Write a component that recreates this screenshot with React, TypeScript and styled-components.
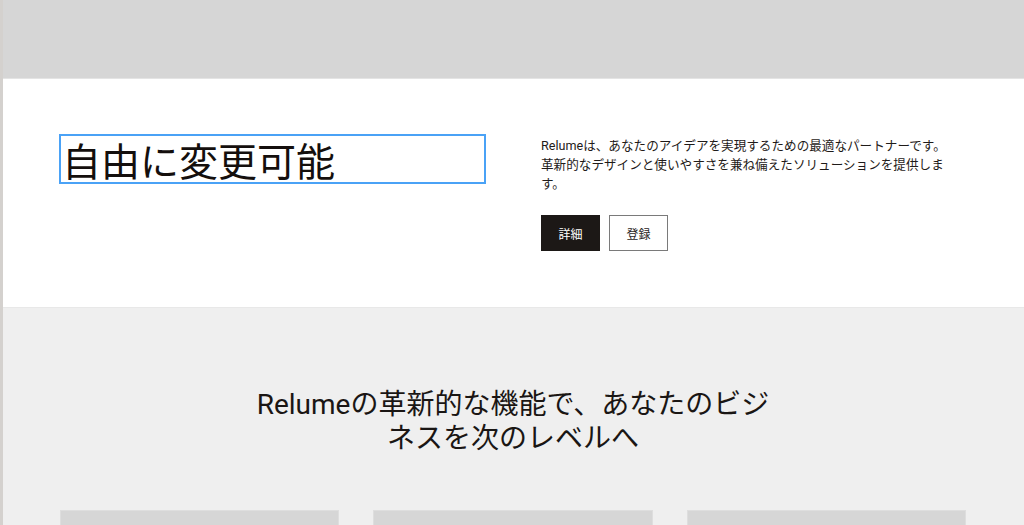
import React from 'react';
import styled, {createGlobalStyle} from 'styled-components';

const GlobalStyle = createGlobalStyle`
  html, body {
    margin: 0;
    padding: 0;
    background: #ffffff;
  }
  * {
    box-sizing: border-box;
  }
  body {
    font-family: "Roboto", "Noto Sans CJK JP", sans-serif;
    color: #1a1614;
  }
`

const FEATURES = [{id: 1}, {id: 2}, {id: 3}];

export default function App() {
  return (
    <>
      <GlobalStyle/>
      <Page>
        <TopBand/>
        <HeroSection>
          <HeroGrid>
            <HeroTitleBox>
              <HeroTitle>自由に変更可能</HeroTitle>
            </HeroTitleBox>
            <HeroContent>
              <HeroText>
                Relumeは、あなたのアイデアを実現するための最適なパートナーです。革新的なデザインと使いやすさを兼ね備えたソリューションを提供します。
              </HeroText>
              <ButtonRow>
                <Button variant={'primary'}>詳細</Button>
                <Button variant={'secondary'}>登録</Button>
              </ButtonRow>
            </HeroContent>
          </HeroGrid>
        </HeroSection>
        <FeatureSection>
          <FeatureHeading>Relumeの革新的な機能で、あなたのビジネスを次のレベルへ</FeatureHeading>
          <CardGrid>
            {FEATURES.map((f) => <Card key={f.id}/>)}
          </CardGrid>
        </FeatureSection>
      </Page>
    </>
  );
}

const Page = styled.div`
  height: 525px;
  overflow: hidden;
  border-left: 3px solid #d4d1ce;
  display: flex;
  flex-direction: column;
`

const TopBand = styled.div`
  height: 79px;
  flex-shrink: 0;
  background-color: #d6d6d6;
  border-bottom: 1px solid #e4e4e4;
`

const HeroSection = styled.section`
  background-color: #ffffff;
  padding: 55px 58px 56px 56px;
  height: 228px;
  flex-shrink: 0;
`

const HeroGrid = styled.div`
  display: grid;
  grid-template-columns: 427px 1fr;
  column-gap: 55px;
  align-items: start;
`

const HeroTitleBox = styled.div`
  border: 2px solid #4aa2f6;
  height: 50px;
  padding: 0 1px;
  display: flex;
  align-items: center;
`

const HeroTitle = styled.h1`
  margin: 0;
  font-family: "Noto Sans CJK JP", sans-serif;
  font-weight: 400;
  font-size: 39px;
  line-height: 46px;
  color: #140f0d;
`

const HeroContent = styled.div`
  display: flex;
  flex-direction: column;
  padding-top: 2px;
`

const HeroText = styled.p`
  margin: 0;
  max-width: 414px;
  font-size: 12.6px;
  line-height: 19px;
  color: #1f1b19;
`

const ButtonRow = styled.div`
  display: flex;
  gap: 9px;
  margin-top: 22px;
`

const Button = styled.button<{variant: 'primary' | 'secondary'}>`
  width: 59px;
  height: 36px;
  padding: 0;
  font-family: "Noto Sans CJK JP", sans-serif;
  font-size: 12px;
  cursor: pointer;
  border: 1px solid ${({variant}) => variant === 'primary' ? '#1c1816' : '#7a7a7a'};
  background-color: ${({variant}) => variant === 'primary' ? '#1c1816' : '#ffffff'};
  color: ${({variant}) => variant === 'primary' ? '#ffffff' : '#2a2624'};
`

const FeatureSection = styled.section`
  flex: 1;
  background-color: #efefef;
  border-top: 1px solid #e8e8e8;
  padding: 80px 58px 0 57px;
  display: flex;
  flex-direction: column;
  align-items: center;
`

const FeatureHeading = styled.h2`
  margin: 0;
  max-width: 524px;
  text-align: center;
  font-weight: 400;
  font-size: 28px;
  line-height: 34px;
  color: #1a1614;
`

const CardGrid = styled.div`
  width: 100%;
  margin-top: 54px;
  display: grid;
  grid-template-columns: repeat(3, 1fr);
  gap: 34px;
`

const Card = styled.div`
  height: 200px;
  background-color: #d6d6d6;
  border: 1px solid #dedede;
`
